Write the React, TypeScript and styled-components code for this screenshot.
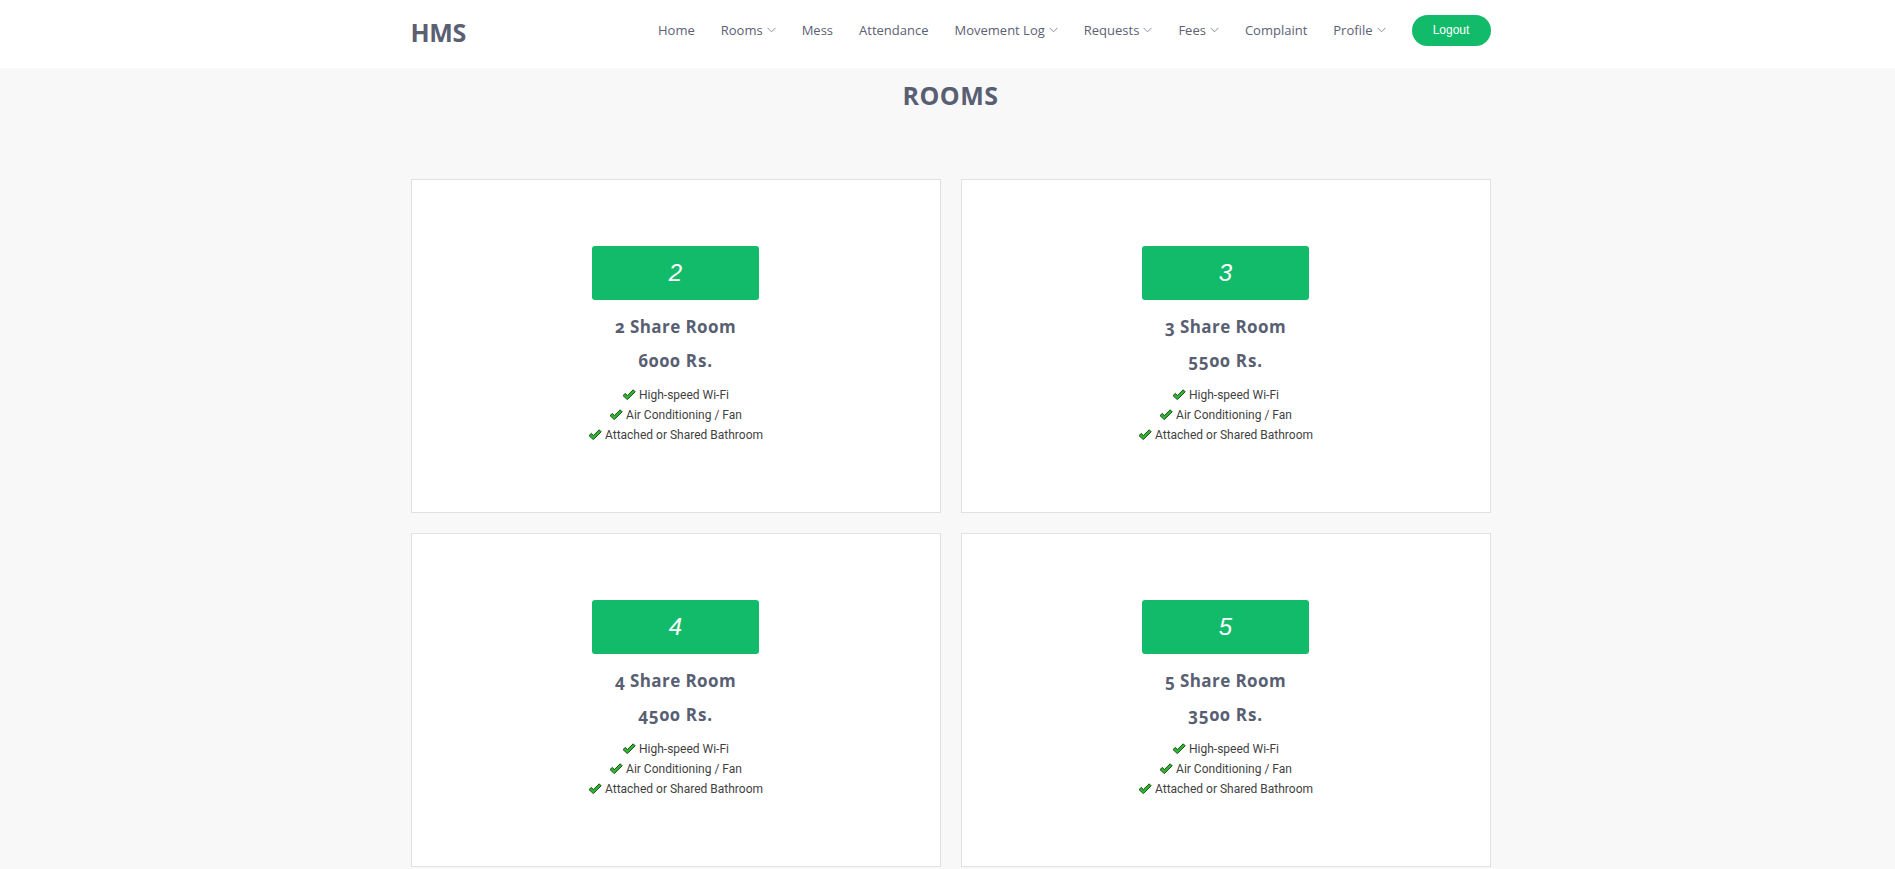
import React from "react";
import styled, { createGlobalStyle } from "styled-components";

const GlobalStyle = createGlobalStyle`
  html, body { margin: 0; padding: 0; }
  body {
    background: #f8f8f8;
    font-family: "Open Sans", "Noto Sans", sans-serif;
    color: #595f73;
  }
  * { box-sizing: border-box; }
`;

const Header = styled.header`
  background: #ffffff;
  height: 68px;
`;

const Container = styled.div`
  width: 1080px;
  margin-left: calc(50% - 537px);
`;

const HeaderInner = styled(Container)`
  height: 100%;
  display: flex;
  align-items: center;
  justify-content: space-between;
`;

const Brand = styled.div`
  font-family: "Open Sans", sans-serif;
  font-weight: 700;
  font-size: 25px;
  color: #5a5f72;
  letter-spacing: -0.3px;
  margin-top: -4px;
`;

const Nav = styled.nav`
  display: flex;
  align-items: center;
  gap: 26px;
  margin-top: -8px;
`;

const NavItem = styled.a`
  display: flex;
  align-items: center;
  gap: 4px;
  font-family: "Open Sans", sans-serif;
  font-size: 13px;
  color: #5c6174;
  text-decoration: none;
  cursor: pointer;
`;

const LogoutButton = styled.button`
  width: 79px;
  height: 31px;
  border: none;
  border-radius: 16px;
  background: #12bb6a;
  color: #ffffff;
  font-family: "Liberation Sans", Arial, sans-serif;
  font-size: 12px;
  cursor: pointer;
  padding: 0;
`;

const Main = styled(Container)`
  padding-bottom: 40px;
`;

const Title = styled.h2`
  margin: 0;
  padding-top: 10px;
  height: 111px;
  text-align: center;
  font-family: "Open Sans", sans-serif;
  font-weight: 700;
  font-size: 25px;
  color: #595f73;
  letter-spacing: 0.5px;
`;

const Grid = styled.div`
  display: grid;
  grid-template-columns: repeat(2, 530px);
  gap: 20px;
`;

const Card = styled.div`
  background: #ffffff;
  border: 1px solid #e1e1e1;
  height: 334px;
  display: flex;
  flex-direction: column;
  align-items: center;
  padding-top: 66px;
`;

const Badge = styled.div`
  width: 167px;
  height: 54px;
  border-radius: 3px;
  background: #12bb6a;
  color: #ffffff;
  display: flex;
  align-items: center;
  justify-content: center;
  font-family: "Liberation Sans", Arial, sans-serif;
  font-style: italic;
  font-size: 24px;
`;

const RoomName = styled.div`
  margin-top: 15px;
  font-family: "Open Sans", sans-serif;
  font-weight: 700;
  font-size: 17px;
  line-height: 24px;
  letter-spacing: 0.4px;
  color: #595f73;
  font-variant-numeric: oldstyle-nums;
`;

const Price = styled(RoomName)`
  margin-top: 10px;
  letter-spacing: 0.8px;
`;

const Features = styled.ul`
  list-style: none;
  margin: 12px 0 0;
  padding: 0;
  display: flex;
  flex-direction: column;
  align-items: center;
`;

const Feature = styled.li`
  display: flex;
  align-items: center;
  gap: 3px;
  height: 20px;
  font-family: "Roboto", "Liberation Sans", sans-serif;
  font-size: 12px;
  color: #3f3f3f;
`;

const Chevron = () => (
  <svg width="9" height="6" viewBox="0 0 9 6" aria-hidden="true">
    <polyline points="0.5,0.8 4.5,4.8 8.5,0.8" fill="none" stroke="#8a8e9b" strokeWidth="1" />
  </svg>
);

const Check = () => (
  <svg width="14" height="12" viewBox="0 0 14 12" aria-hidden="true">
    <path
      d="M1 6.6 L3.4 4.4 L5.3 6.6 L11.2 0.8 L13.2 2.8 L5.3 10.6 Z"
      fill="#2fb52f"
      stroke="#1d4d1d"
      strokeWidth="1"
      strokeLinejoin="round"
    />
  </svg>
);

const navItems: { label: string; dropdown?: boolean }[] = [
  { label: "Home" },
  { label: "Rooms", dropdown: true },
  { label: "Mess" },
  { label: "Attendance" },
  { label: "Movement Log", dropdown: true },
  { label: "Requests", dropdown: true },
  { label: "Fees", dropdown: true },
  { label: "Complaint" },
  { label: "Profile", dropdown: true },
];

const rooms = [
  { share: 2, price: 6000 },
  { share: 3, price: 5500 },
  { share: 4, price: 4500 },
  { share: 5, price: 3500 },
];

const features = ["High-speed Wi-Fi", "Air Conditioning / Fan", "Attached or Shared Bathroom"];

export default function App() {
  return (
    <>
      <GlobalStyle />
      <Header>
        <HeaderInner>
          <Brand>HMS</Brand>
          <Nav>
            {navItems.map((item) => (
              <NavItem key={item.label}>
                {item.label}
                {item.dropdown && <Chevron />}
              </NavItem>
            ))}
            <LogoutButton>Logout</LogoutButton>
          </Nav>
        </HeaderInner>
      </Header>
      <Main>
        <Title>ROOMS</Title>
        <Grid>
          {rooms.map((r) => (
            <Card key={r.share}>
              <Badge>{r.share}</Badge>
              <RoomName>{r.share} Share Room</RoomName>
              <Price>{r.price} Rs.</Price>
              <Features>
                {features.map((f) => (
                  <Feature key={f}>
                    <Check />
                    {f}
                  </Feature>
                ))}
              </Features>
            </Card>
          ))}
        </Grid>
      </Main>
    </>
  );
}
